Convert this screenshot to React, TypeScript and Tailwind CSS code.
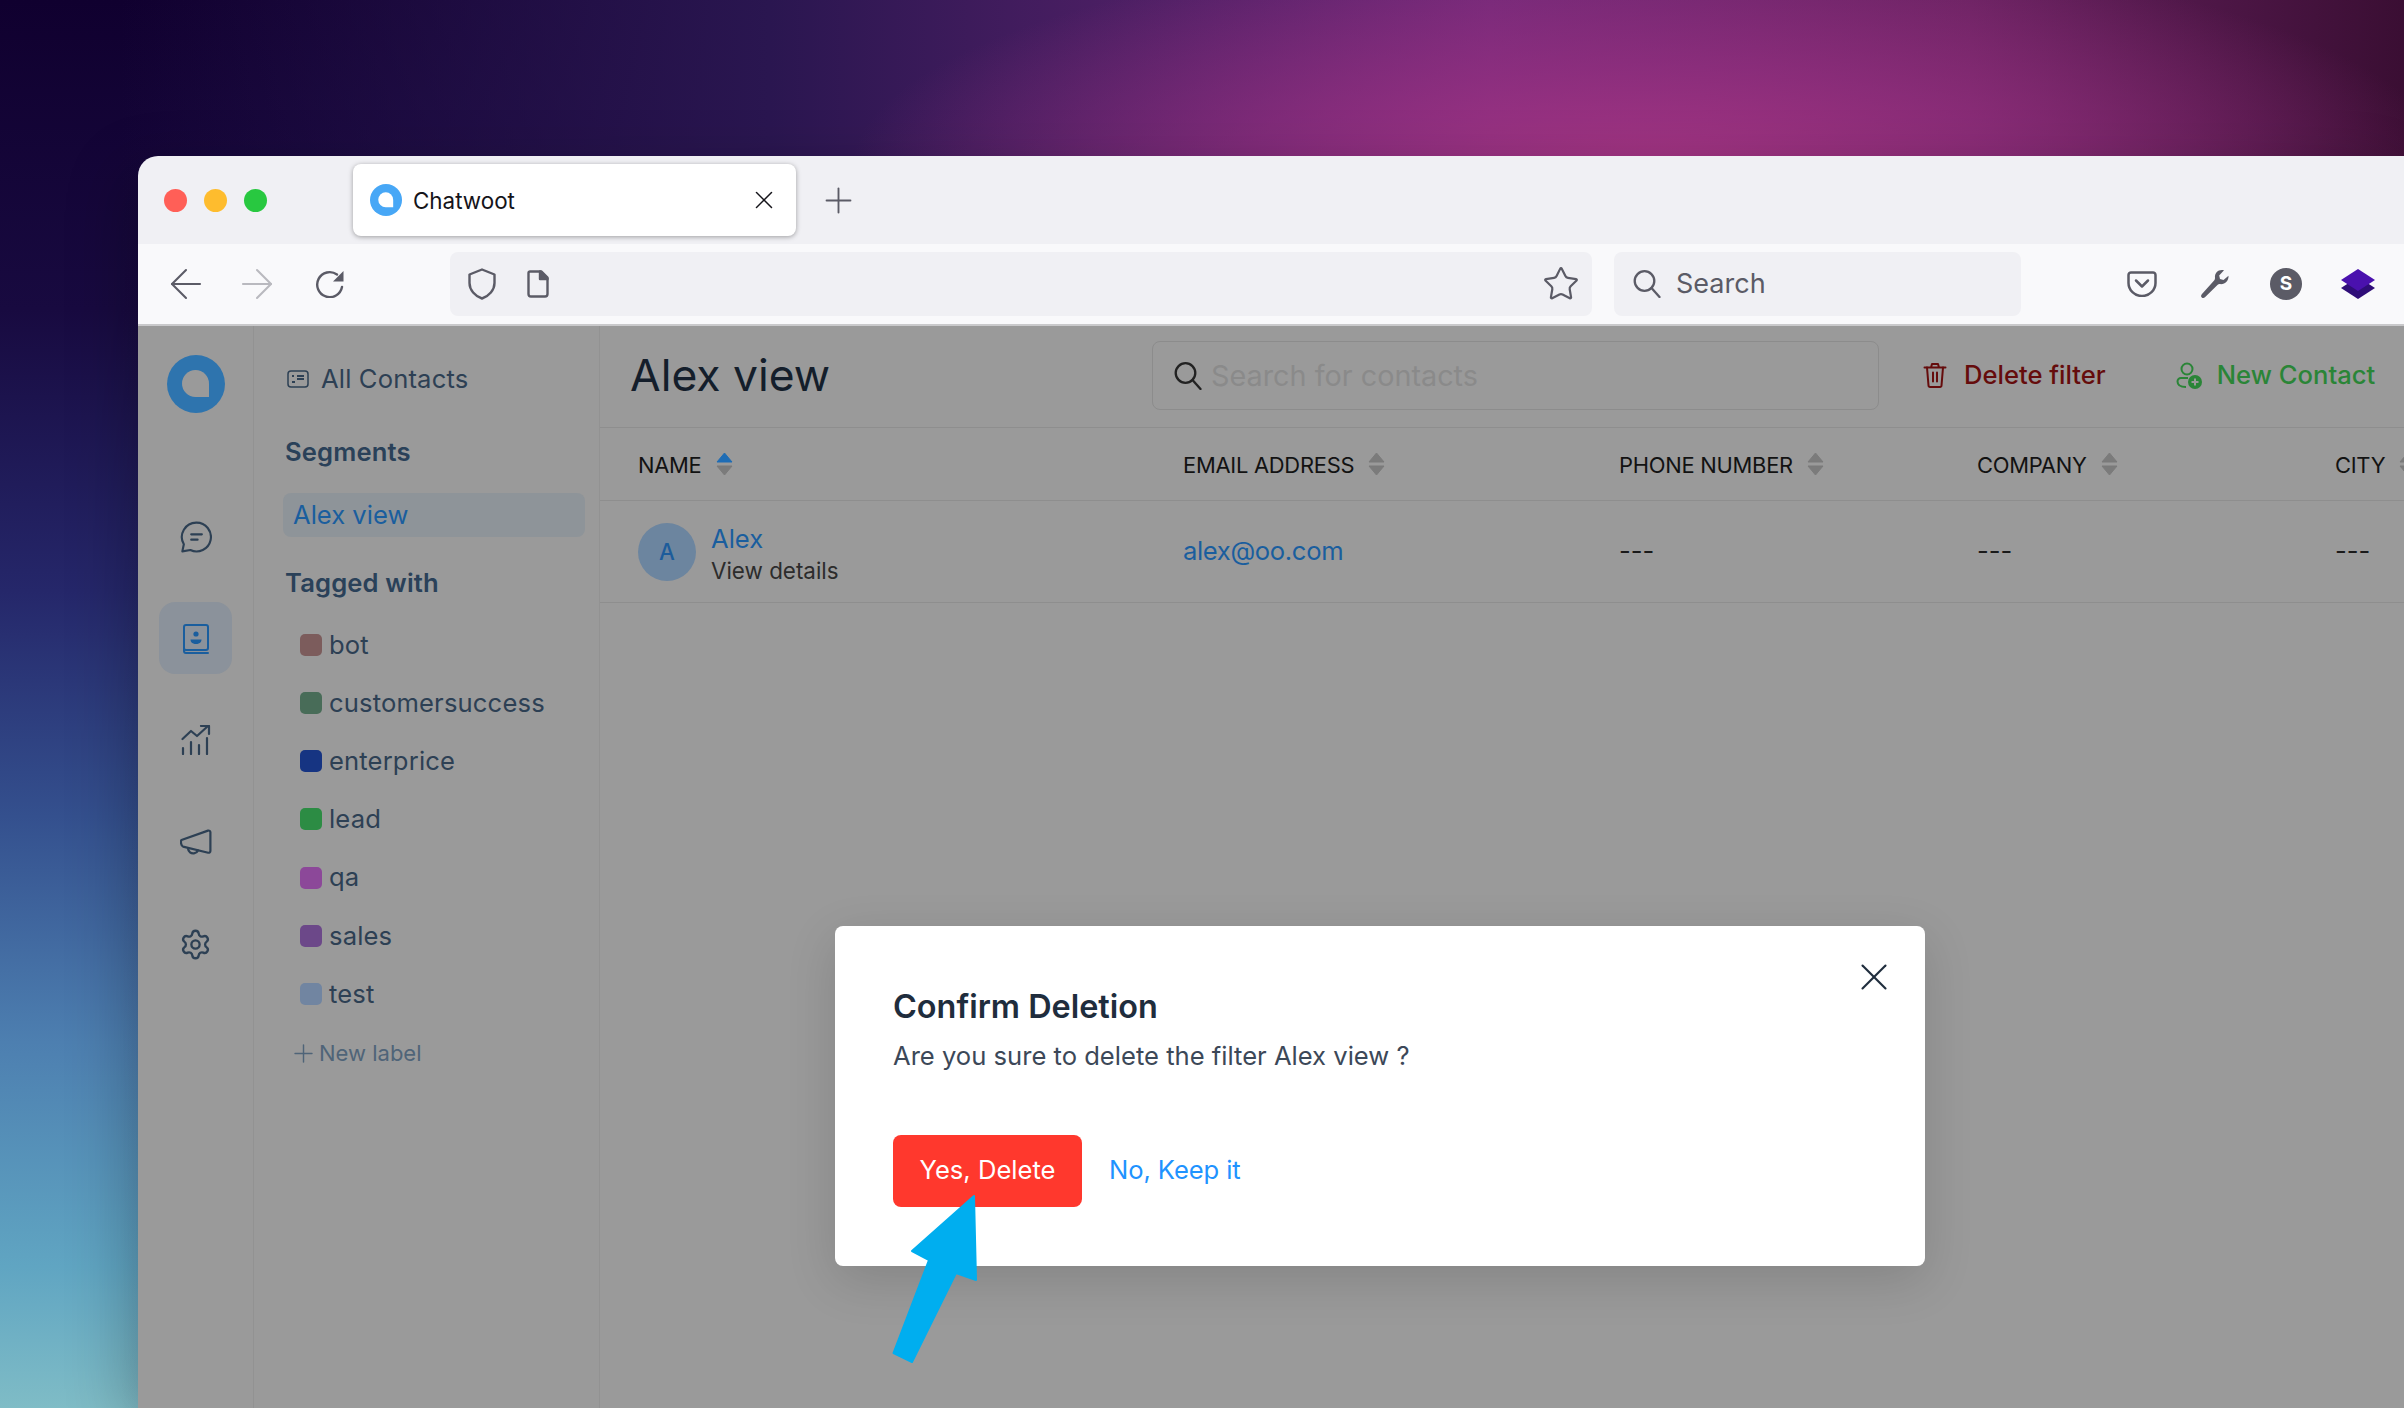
import React from 'react';
import { ArrowLeft, ArrowRight, Plus, Settings, Star, X } from 'lucide-react';

const labels = [
  { name: 'bot', swatch: 'bg-[#7c5c5c]' },
  { name: 'customersuccess', swatch: 'bg-[#486c58]' },
  { name: 'enterprice', swatch: 'bg-[#163482]' },
  { name: 'lead', swatch: 'bg-[#2c8c44]' },
  { name: 'qa', swatch: 'bg-[#8c4899]' },
  { name: 'sales', swatch: 'bg-[#6c4889]' },
  { name: 'test', swatch: 'bg-[#7185a1]' },
];

const Bubble = ({ size, ring, inner }: { size: string; ring: string; inner: string }) => (
  <svg viewBox="0 0 58 58" className={size}>
    <circle cx="29" cy="29" r="29" className={ring} />
    <path d="M28.5 15a13.5 13.5 0 0 1 13.5 13.5V42H28.5a13.5 13.5 0 0 1 0-27Z" className={inner} />
  </svg>
);

const SearchGlyph = ({ className }: { className: string }) => (
  <svg viewBox="0 0 28 28" fill="none" stroke="currentColor" strokeWidth="2.300" strokeLinecap="round" className={className}>
    <circle cx="11.500" cy="11" r="9.800" />
    <path d="M18.500 18 26.500 27" />
  </svg>
);

const SortIcon = ({ active = false }: { active?: boolean }) => (
  <svg viewBox="0 0 17 24" className="w-[17px] h-[24px] shrink-0 -mt-[3px]">
    <path d="M8.5 1 16 10H1Z" strokeLinejoin="round" strokeWidth="1" className={active ? 'fill-[#1f6db5] stroke-[#1f6db5]' : 'fill-[#7b7b7b] stroke-[#7b7b7b]'} />
    <path d="M8.5 23 16 14H1Z" strokeLinejoin="round" strokeWidth="1" className="fill-[#7b7b7b] stroke-[#7b7b7b]" />
  </svg>
);

const ColumnHead = ({ title, active }: { title: string; active?: boolean }) => (
  <div className="flex items-center gap-[14px] pt-[3px] text-[21.9px] tracking-[-0.25px] text-[#121212] whitespace-nowrap">
    <span>{title}</span>
    <SortIcon active={active} />
  </div>
);

const RailButton = ({ active, children }: { active?: boolean; children: React.ReactNode }) => (
  <div className={`w-[73px] h-[72px] rounded-2xl flex items-center justify-center ${active ? 'bg-[#8b929b] text-[#1a5e9e]' : 'text-[#2d4054]'}`}>
    {children}
  </div>
);

const IconRail = () => (
  <div className="w-[116px] shrink-0 border-r border-[#929292] flex flex-col items-center pt-[29px]">
    <Bubble size="w-[58px] h-[58px]" ring="fill-[#2e74ae]" inner="fill-[#9a9a9a]" />
    <div className="mt-[87px] flex flex-col gap-[30px]">
      <RailButton>
        <svg viewBox="0 0 30 30" fill="none" stroke="currentColor" strokeWidth="2" strokeLinecap="round" strokeLinejoin="round" className="w-[32px] h-[32px] mt-[2px]">
          <path d="M15.5 1.5a13.5 13.5 0 1 1-5.8 25.7L2.2 28.5l1.4-6.7A13.5 13.5 0 0 1 15.5 1.5Z" />
          <path d="M10.5 12.5h10M10.5 17.5h6" />
        </svg>
      </RailButton>
      <RailButton active>
        <svg viewBox="0 0 26 30" fill="none" stroke="currentColor" strokeWidth="2" strokeLinecap="round" strokeLinejoin="round" className="w-[26px] h-[30px] mt-[2px]">
          <rect x="1" y="1" width="24" height="25" rx="2" />
          <path d="M1 24v3a2 2 0 0 0 2 2h22" />
          <circle cx="13" cy="10" r="2.6" fill="currentColor" stroke="none" />
          <path d="M7.5 15.5h11c0 3-2.5 4.5-5.5 4.5s-5.5-1.5-5.5-4.5Z" fill="currentColor" stroke="none" />
        </svg>
      </RailButton>
      <RailButton>
        <svg viewBox="0 0 30 30" fill="none" stroke="currentColor" strokeWidth="2.2" strokeLinecap="round" strokeLinejoin="round" className="w-[30px] h-[30px]">
          <path d="M1.5 14 10 6l6 5 11-10" />
          <path d="M20 1h8v8" />
          <path d="M2 23v6M10 17v12M18 20v9M26 13v16" />
        </svg>
      </RailButton>
      <RailButton>
        <svg viewBox="0 0 32 26" fill="none" stroke="currentColor" strokeWidth="2.2" strokeLinecap="round" strokeLinejoin="round" className="w-[32px] h-[26px]">
          <path d="M1.5 11 28 1.6a1.8 1.8 0 0 1 2.4 1.7v18.6a1.8 1.8 0 0 1-2.2 1.8L3 17.6c-2-.8-2.6-5.2-1.5-6.6Z" />
          <path d="M8 19.5c.4 3.4 3 5.2 6 4.8 2-.3 3.4-1.4 4-2.8" />
        </svg>
      </RailButton>
      <RailButton>
        <Settings size={33} strokeWidth={1.7} />
      </RailButton>
    </div>
  </div>
);

const LabelsPanel = () => (
  <div className="w-[346px] shrink-0 border-r border-[#929292] flex flex-col pl-[31px] text-[25.6px] text-[#2d4054] tracking-[0.15px]">
    <div className="mt-[33px] h-[40px] flex items-center">
      <svg viewBox="0 0 22 18" fill="none" className="w-[22px] h-[18px] ml-[2px] mr-[12px] stroke-[#2d4054]" strokeWidth="1.5">
        <rect x="1" y="1" width="20" height="16" rx="3" />
        <path d="M5 6h2M5 12h3M10 6h7M10 9h7" strokeWidth="2" />
      </svg>
      <span>All Contacts</span>
    </div>
    <div className="mt-[33px] h-[40px] flex items-center font-semibold text-[#2a4159]">Segments</div>
    <div className="mt-[21px] -ml-[2px] w-[302px] h-[44px] flex items-center pl-[10px] rounded-lg bg-[#8e9499] text-[#1a5e9e] tracking-normal">Alex view</div>
    <div className="mt-[26px] h-[40px] flex items-center font-semibold text-[#2a4159]">Tagged with</div>
    <div className="mt-[13px] flex flex-col">
      {labels.map((label) => (
        <div key={label.name} className="h-[58.15px] flex items-center pl-[15px]">
          <span className={`w-[22px] h-[22px] rounded-[5px] ${label.swatch}`} />
          <span className="ml-[7px]">{label.name}</span>
        </div>
      ))}
      <div className="h-[58px] pt-[3px] flex items-center pl-[4px] text-[22px] text-[#4f6478] tracking-normal">
        <Plus size={29} strokeWidth={1.2} />
        <span className="ml-[1px]">New label</span>
      </div>
    </div>
  </div>
);

const MainPanel = () => (
  <div className="flex-1 min-w-0 flex flex-col">
    <div className="h-[102px] shrink-0 border-b border-[#8e8e8e] flex items-center pl-[30px]">
      <h1 className="w-[522px] text-[44.4px] font-normal text-[#141e2b] -mt-[2px]">Alex view</h1>
      <div className="w-[727px] h-[69px] rounded-lg border border-[#8c8c8c] flex items-center pl-[21px] mt-[-2px]">
        <SearchGlyph className="w-[28px] h-[28px] text-[#222]" />
        <span className="ml-[9px] text-[28.8px] text-[#8a8a8a]">Search for contacts</span>
      </div>
      <div className="ml-[44px] flex items-center text-[#650c0c] -mt-[2px]">
        <svg viewBox="0 0 24 26" fill="none" stroke="currentColor" strokeWidth="2" strokeLinecap="round" strokeLinejoin="round" className="w-[24px] h-[26px]">
          <path d="M1.5 5.5h21M8 5.5l1-3.5h6l1 3.5" />
          <path d="M4 5.5l1.5 18a1.5 1.5 0 0 0 1.5 1.5h10a1.5 1.5 0 0 0 1.5-1.5L20 5.5" />
          <path d="M10 10.5v9M14 10.5v9" />
        </svg>
        <span className="ml-[17px] text-[25.6px] font-medium whitespace-nowrap">Delete filter</span>
      </div>
      <div className="ml-[70px] flex items-center text-[#2a8537] -mt-[2px]">
        <svg viewBox="0 0 26 27" fill="none" stroke="currentColor" strokeWidth="2" className="w-[26px] h-[27px] shrink-0">
          <circle cx="11" cy="7" r="5.5" />
          <path d="M12 16H5a3.5 3.5 0 0 0-3.5 3.5c0 3.500 3.500 5.500 8.500 5.500" />
          <circle cx="19" cy="20" r="7" fill="currentColor" stroke="none" />
          <path d="M19 16.500v7M15.500 20h7" stroke="#9a9a9a" />
        </svg>
        <span className="ml-[15px] text-[25.6px] font-medium whitespace-nowrap">New Contact</span>
      </div>
    </div>
    <div className="h-[73px] shrink-0 border-b border-[#8e8e8e] grid grid-cols-[545px_436px_358px_358px_100px] items-center pl-[38px]">
      <ColumnHead title="NAME" active />
      <ColumnHead title="EMAIL ADDRESS" />
      <ColumnHead title="PHONE NUMBER" />
      <ColumnHead title="COMPANY" />
      <ColumnHead title="CITY" />
    </div>
    <div className="h-[102px] shrink-0 border-b border-[#8e8e8e] grid grid-cols-[545px_436px_358px_358px_100px] items-center pl-[38px] text-[25.6px]">
      <div className="flex items-center">
        <div className="w-[58px] h-[58px] rounded-full bg-[#6c859f] flex items-center justify-center text-[22.4px] font-medium text-[#1c5c9b]">A</div>
        <div className="ml-[15px] flex flex-col pt-[7px]">
          <span className="text-[#1a5e9e] leading-[32px]">Alex</span>
          <span className="text-[22.4px] text-[#2c2c2c] leading-[32px]">View details</span>
        </div>
      </div>
      <span className="text-[#1a5e9e] tracking-[-0.35px]">alex@oo.com</span>
      <span className="text-[#1a1a1a]">---</span>
      <span className="text-[#1a1a1a]">---</span>
      <span className="text-[#1a1a1a]">---</span>
    </div>
  </div>
);

const Browser = () => (
  <div className="w-[2266px] h-[1252px] shrink-0 rounded-tl-[20px] overflow-hidden flex flex-col shadow-[-14px_14px_60px_rgba(0,0,0,0.22)]">
    <div className="h-[88px] shrink-0 bg-[#f0f0f4] flex items-center pl-[26px]">
      <div className="flex gap-[17px]">
        <span className="w-[23px] h-[23px] rounded-full bg-[#ff5f57]" />
        <span className="w-[23px] h-[23px] rounded-full bg-[#febc2e]" />
        <span className="w-[23px] h-[23px] rounded-full bg-[#28c840]" />
      </div>
      <div className="ml-[86px] w-[443px] h-[72px] rounded-lg bg-white shadow-[0_1px_5px_rgba(0,0,0,0.35)] flex items-center pl-[17px]">
        <Bubble size="w-[32px] h-[32px]" ring="fill-[#47a7f6]" inner="fill-white" />
        <span className="ml-[11px] pt-[2px] text-[22.4px] text-[#15141a]">Chatwoot</span>
        <X size={30} strokeWidth={1.2} className="ml-auto mr-[17px] text-[#15141a]" />
      </div>
      <Plus size={41} strokeWidth={1.1} className="ml-[22px] text-[#5b5b66]" />
    </div>
    <div className="h-[80px] shrink-0 bg-[#f9f9fb] flex items-center pl-[24px] text-[#5b5b66]">
      <ArrowLeft size={48} strokeWidth={1.05} />
      <ArrowRight size={48} strokeWidth={1.05} className="ml-[23px] text-[#b9b9bf]" />
      <svg viewBox="0 0 30 28" fill="none" stroke="currentColor" strokeWidth="2.4" strokeLinecap="round" className="ml-[34px] w-[30px] h-[28px]">
        <path d="M27 17a12.500 12.500 0 1 1-5-12.500" />
        <path d="M28.500 1v10.500H18Z" fill="currentColor" stroke="none" />
      </svg>
      <div className="ml-[105px] w-[1142px] h-[64px] rounded-lg bg-[#f0f0f4] flex items-center pl-[18px]">
        <svg viewBox="0 0 28 32" fill="none" stroke="currentColor" strokeWidth="2.400" strokeLinejoin="round" className="w-[28px] h-[32px]">
          <path d="M14 1.500 26.500 6.500V15c0 7-5.500 13-12.500 15.500C7 28 1.500 22 1.500 15V6.500Z" />
        </svg>
        <svg viewBox="0 0 22 28" fill="none" stroke="currentColor" strokeWidth="2.400" strokeLinejoin="round" className="ml-[31px] w-[22px] h-[28px]">
          <path d="M3 1.500h10.500L20.500 8.500V24a2.500 2.500 0 0 1-2.500 2.500H4A2.500 2.500 0 0 1 1.500 24V3A1.500 1.500 0 0 1 3 1.500Z" />
          <path d="M13 1.500h1.500l6 6V9H13Z" fill="currentColor" />
        </svg>
        <Star size={38} strokeWidth={1.4} className="ml-auto mr-[12px]" />
      </div>
      <div className="ml-[22px] w-[407px] h-[64px] rounded-lg bg-[#f0f0f4] flex items-center pl-[19px]">
        <SearchGlyph className="w-[28px] h-[28px]" />
        <span className="ml-[15px] text-[27px]">Search</span>
      </div>
      <svg viewBox="0 0 30 26" fill="none" stroke="currentColor" strokeWidth="2.500" strokeLinecap="round" strokeLinejoin="round" className="ml-[106px] w-[30px] h-[26px]">
        <path d="M4 1.500h22A2.500 2.500 0 0 1 28.500 4v8a13.500 13 0 0 1-27 0V4A2.500 2.500 0 0 1 4 1.500Z" />
        <path d="M9 9.500l6 6 6-6" />
      </svg>
      <svg viewBox="0 0 30 30" fill="currentColor" className="ml-[43px] w-[30px] h-[30px]">
        <path d="M22 1c-4.500 0-7.500 3.500-7 8 .1 1-.2 1.800-.9 2.500L2 25c-1.200 1.400-1.200 2.600-.2 3.500 1 .9 2.200.7 3.400-.5l12.500-12.200c.6-.6 1.400-.8 2.300-.7 5 .5 8.800-3.200 8.500-8.300l-5 4.200-3.500-1-.8-3.400L24 1.300c-.6-.2-1.300-.3-2-.3Z" />
      </svg>
      <div className="ml-[40px] w-[32px] h-[32px] rounded-full bg-[#5b5b66] flex items-center justify-center text-[19px] font-bold text-white">S</div>
      <svg viewBox="0 0 34 30" className="ml-[39px] w-[34px] h-[30px]">
        <path d="M17 8 34 19 17 30 0 19Z" fill="#2f0d78" />
        <path d="M17 0 34 11 17 22 0 11Z" fill="#4a11ae" />
      </svg>
    </div>
    <div className="h-[2px] shrink-0 bg-[#c9c9cb]" />
    <div className="flex-1 min-h-0 bg-[#9a9a9a] flex">
      <IconRail />
      <LabelsPanel />
      <MainPanel />
    </div>
  </div>
);

const ConfirmModal = () => (
  <div className="absolute left-[835px] top-[926px] w-[1090px] h-[340px] rounded-lg bg-white shadow-[0_14px_50px_rgba(0,0,0,0.14)] pl-[58px]">
    <X size={46} strokeWidth={1.1} className="absolute right-[28px] top-[28px] text-[#1f2d3d]" />
    <h2 className="mt-[61px] text-[32.400px] leading-[40px] font-semibold text-[#1f2d3d]">Confirm Deletion</h2>
    <p className="mt-[9px] text-[25.6px] leading-[40px] text-[#3c4858]">Are you sure to delete the filter Alex view ?</p>
    <div className="mt-[59px] flex items-center">
      <button className="w-[189px] h-[72px] pb-[1px] rounded-lg bg-[#ff382d] text-white text-[25.6px]">Yes, Delete</button>
      <button className="ml-[27px] pb-[1px] text-[#1f93ff] text-[25.6px] tracking-[-0.1px]">No, Keep it</button>
    </div>
  </div>
);

const App: React.FC = () => (
  <div className="relative w-[2404px] h-[1408px] overflow-hidden pl-[138px] pt-[156px] font-['Inter',sans-serif] bg-[radial-gradient(ellipse_800px_230px_at_1650px_170px,#ad3786dd_0%,#9a3182aa_45%,transparent_100%),linear-gradient(to_right,transparent_0%,transparent_5%,#2a1650_32%,#6f2878_62%,#66215f_82%,#3a0e33_100%),linear-gradient(to_bottom,#10002f_0%,#180a40_22%,#25276a_42%,#34508e_58%,#4d7fb0_74%,#60a5c2_90%,#7fbcc6_100%)]">
    <Browser />
    <ConfirmModal />
    <svg viewBox="0 0 2404 1408" className="absolute inset-0 w-[2404px] h-[1408px] pointer-events-none">
      <path d="M974 1196 976 1280 956 1273 912 1362 893.500 1353 929 1260 912 1251Z" fill="#00aeef" stroke="#00aeef" strokeWidth="2" strokeLinejoin="round" />
    </svg>
  </div>
);

export default App;
